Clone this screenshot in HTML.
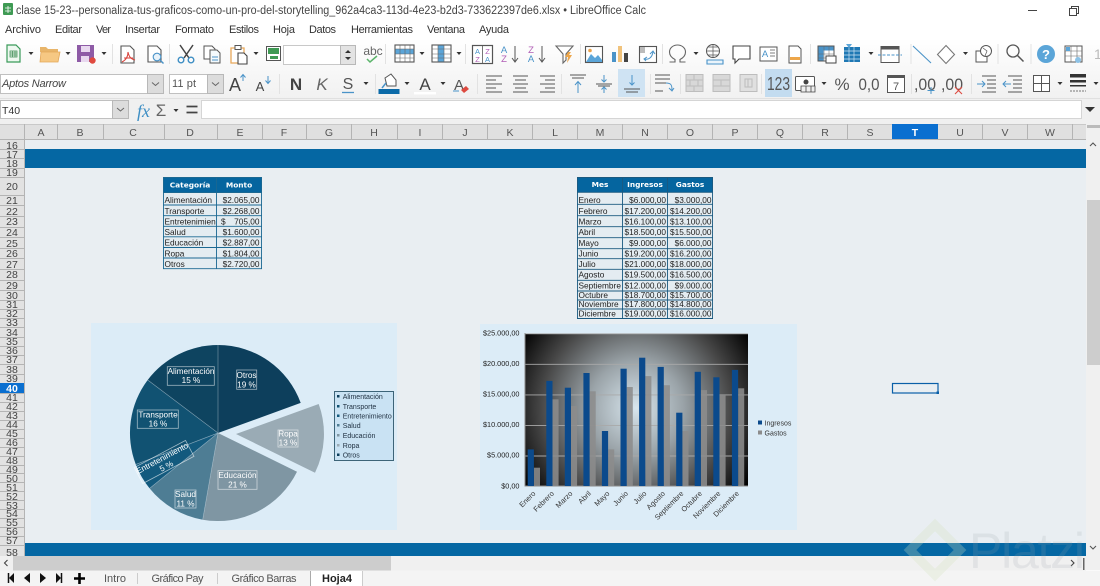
<!DOCTYPE html>
<html lang="es"><head><meta charset="utf-8"><title>LibreOffice Calc</title>
<style>
html,body{margin:0;padding:0;width:1100px;height:586px;overflow:hidden;background:#fff}
svg{display:block;font-family:"Liberation Sans",sans-serif;filter:blur(.35px)}
.m{font-size:11px;fill:#333}
.c{font-size:10.5px;fill:#555;text-anchor:middle}
.r{font-size:10.5px;fill:#444;text-anchor:middle}
.t{font-size:8.3px;fill:#222}
.n{font-size:8.3px;fill:#222;text-anchor:end}
.h{font-family:"DejaVu Sans",sans-serif;font-weight:bold;font-size:7.4px;fill:#fff;text-anchor:middle}
.p{font-size:8.2px;fill:#fff;text-anchor:middle}
.l{font-size:7px;fill:#234}
.y{font-size:7.3px;fill:#222;text-anchor:end}
.x{font-size:7.3px;fill:#333;text-anchor:end}
.b{fill:none;stroke:#fff;stroke-opacity:.6;stroke-width:.8}
.k{fill:none;stroke:#555;stroke-width:1.1}
.tab{font-size:11px;fill:#555;text-anchor:middle}
</style></head><body>
<svg width="1100" height="586" viewBox="0 0 1100 586" xmlns="http://www.w3.org/2000/svg">
<defs>
<linearGradient id="tb" x1="0" y1="0" x2="0" y2="1"><stop offset="0" stop-color="#fff"/><stop offset="1" stop-color="#f1f1f1"/></linearGradient>
<radialGradient id="rg" gradientUnits="userSpaceOnUse" cx="636" cy="408" r="135"><stop offset="0" stop-color="#d8e6ee"/><stop offset=".35" stop-color="#9aa3a8"/><stop offset=".7" stop-color="#484848"/><stop offset="1" stop-color="#000"/></radialGradient>
</defs>
<rect width="1100" height="586" fill="#fff"/>
<!-- title -->
<rect x="3" y="3" width="10" height="12" rx="1" fill="#3f9a54"/><path d="M5 8h6M5 11h6M8 6v7" stroke="#fff" stroke-width=".8"/>
<text x="16" y="14" font-size="11.5" fill="#444" textLength="630" lengthAdjust="spacingAndGlyphs">clase 15-23--personaliza-tus-graficos-como-un-pro-del-storytelling_962a4ca3-113d-4e23-b2d3-733622397de6.xlsx • LibreOffice Calc</text>
<path d="M1028 10.500h9" stroke="#444"/><path d="M1069.500 8.500h7v7h-7zM1071.500 8.500v-2h7v7h-2" fill="none" stroke="#444"/>
<!-- menu -->
<text class="m" x="5" y="33" textLength="36">Archivo</text><text class="m" x="55" y="33" textLength="27">Editar</text><text class="m" x="96" y="33" textLength="15">Ver</text><text class="m" x="125" y="33" textLength="35">Insertar</text><text class="m" x="175" y="33" textLength="39">Formato</text><text class="m" x="229" y="33" textLength="30">Estilos</text><text class="m" x="273" y="33" textLength="22">Hoja</text><text class="m" x="309" y="33" textLength="27">Datos</text><text class="m" x="351" y="33" textLength="62">Herramientas</text><text class="m" x="427" y="33" textLength="38">Ventana</text><text class="m" x="479" y="33" textLength="30">Ayuda</text>
<!-- toolbar bg -->
<rect y="38" width="1100" height="60" fill="url(#tb)"/>
<rect y="98" width="1100" height="26" fill="#f0f0f0"/>
<path d="M0 98.500h1100" stroke="#dedede"/>
<!-- ROW 1 ICONS -->
<path d="M7 45h9l4 4v13H7z" fill="#eef8f0" stroke="#3a9a5a" stroke-width="1.2"/><path d="M10 51h7v6h-7zM10 53h7M10 55h7M12.500 51v6M15 51v6" fill="none" stroke="#3a8a50" stroke-width=".7"/>
<path d="M28.500 52h5l-2.500 3z" fill="#333"/>
<path d="M40 47h6l2 2h10v3h-18z" fill="#e8b56a"/><path d="M40 62l1-10h19l-2 10z" fill="#f6c883" stroke="#e3a85a" stroke-width=".8"/>
<path d="M65.500 52h5l-2.500 3z" fill="#333"/>
<path d="M77 45h17v17H77z" fill="#8e5ba6"/><rect x="81" y="46" width="9" height="6" fill="#e8d8ef"/><rect x="81" y="56" width="8" height="6" fill="#e8d8ef"/><circle cx="92.500" cy="60.500" r="3.200" fill="#e04a3f"/>
<path d="M101.500 52h5l-2.500 3z" fill="#333"/>
<path d="M112.500 44v20" stroke="#e2e2e2"/>
<path d="M121 46h9l4 4v13h-13z" fill="#fff" stroke="#555" stroke-width="1.100"/><path d="M128 52c0 5-2 8-6 10M128 52c1 5 3 7 7 8M124 58h9" fill="none" stroke="#d8413a" stroke-width="1"/>
<path d="M148 46h9l4 4v12h-13z" fill="#fff" stroke="#555" stroke-width="1.100"/><circle cx="157" cy="57" r="3.800" fill="#e9f3fa" stroke="#4a93c8" stroke-width="1.100"/><path d="M160 60l3.500 3.500" stroke="#4a93c8" stroke-width="1.400"/>
<path d="M169.500 44v20" stroke="#e2e2e2"/>
<path d="M180 45l9 13M193 45l-9 13" stroke="#444" stroke-width="1.500"/><circle cx="181" cy="60" r="2.800" fill="none" stroke="#3f8fc4" stroke-width="1.400"/><circle cx="191" cy="60" r="2.800" fill="none" stroke="#3f8fc4" stroke-width="1.400"/>
<path d="M204 46h8l3 3v10h-11z" fill="#fff" stroke="#555"/><path d="M210 50h7l3 3v10h-10z" fill="#f4fafd" stroke="#555"/><path d="M212 57h6M212 60h6" stroke="#4a93c8"/>
<path d="M231 48h13v15h-13z" fill="#fff" stroke="#e8a85a" stroke-width="1.300"/><rect x="235" y="45.500" width="6" height="4" fill="#fff" stroke="#555"/><path d="M238 53h6l3 3v8h-9z" fill="#fff" stroke="#444" stroke-width="1.100"/>
<path d="M253.500 52h5l-2.500 3z" fill="#333"/>
<rect x="266.500" y="46.500" width="14" height="14" fill="#fff" stroke="#555"/><rect x="268" y="48" width="11" height="6" fill="#3f9a54"/><rect x="270" y="56" width="8" height="3" fill="#3f9a54"/>
<rect x="283.500" y="45.500" width="57" height="19" fill="#fff" stroke="#c8c8c8"/><rect x="340.500" y="45.500" width="15" height="19" fill="#e3e3e3" stroke="#b8b8b8"/><path d="M345 53l3-3 3 3zM345 57l3 3 3-3z" fill="#333"/>
<text x="373" y="55" font-size="12" fill="#666" text-anchor="middle">abc</text><path d="M367 59l3 3 7-6" fill="none" stroke="#5cb56b" stroke-width="1.500"/>
<path d="M385.500 44v20" stroke="#e2e2e2"/>
<rect x="395" y="45" width="19" height="17" fill="#fff" stroke="#555" stroke-width="1.100"/><rect x="395.500" y="49" width="18" height="5" fill="#5ba5d8"/><path d="M395 49h19M395 54h19M395 58h19M400 45v17M405 45v17M410 45v17" stroke="#666" stroke-width=".6"/>
<path d="M419.500 52h5l-2.500 3z" fill="#333"/>
<rect x="432" y="45" width="19" height="17" fill="#fff" stroke="#555" stroke-width="1.100"/><rect x="438" y="45.500" width="6" height="16" fill="#5ba5d8"/><path d="M432 49h19M432 54h19M432 58h19M438 45v17M444 45v17" stroke="#666" stroke-width=".6"/>
<path d="M456.500 52h5l-2.500 3z" fill="#333"/>
<path d="M465.500 44v20" stroke="#e2e2e2"/>
<rect x="472.500" y="45.500" width="20" height="18" fill="#fff" stroke="#555" stroke-width="1.200"/><path d="M482.500 45v18" stroke="#555" stroke-width=".8"/>
<text x="477.500" y="54" font-size="7.500" fill="#4a93c8" text-anchor="middle">A</text><text x="477.500" y="62" font-size="7.500" fill="#b05cb5" text-anchor="middle">Z</text><text x="487.500" y="54" font-size="7.500" fill="#b05cb5" text-anchor="middle">Z</text><text x="487.500" y="62" font-size="7.500" fill="#4a93c8" text-anchor="middle">A</text>
<text x="504" y="53" font-size="9.500" fill="#4a93c8" text-anchor="middle">A</text><text x="504" y="62" font-size="9.500" fill="#b05cb5" text-anchor="middle">Z</text><path d="M515 46v16M512 58l3 4 3-4" fill="none" stroke="#555" stroke-width="1"/>
<text x="531" y="53" font-size="9.500" fill="#b05cb5" text-anchor="middle">Z</text><text x="531" y="62" font-size="9.500" fill="#4a93c8" text-anchor="middle">A</text><path d="M542 46v16M539 58l3 4 3-4" fill="none" stroke="#555" stroke-width="1"/>
<path d="M556 46h17l-7 8v6l-3 3v-9z" fill="#fff" stroke="#666" stroke-width="1.100"/><path d="M568 52l-3 5h3l-1 6 5-8h-3l2-3z" fill="#eda64a"/>
<path d="M580.500 44v20" stroke="#e2e2e2"/>
<rect x="585.500" y="46.500" width="17" height="16" fill="#fff" stroke="#555" stroke-width="1.100"/><path d="M586 62l5-8 4 4 3-3 4 5v2z" fill="#5ba5d8"/><circle cx="590" cy="50.500" r="1.800" fill="#eba24b"/>
<rect x="612" y="52" width="4" height="10" fill="#4a93c8"/><rect x="618" y="46" width="4" height="16" fill="#f0c27b"/><rect x="624" y="53" width="4" height="9" fill="#444"/>
<rect x="639.500" y="46.500" width="17" height="16" fill="#fff" stroke="#555" stroke-width="1.100"/><path d="M640 47h5v3h-5zM640 50h5v3h-5z" fill="#bbb"/><path d="M645 59c3 1 7-1 8-7M650 54l3-3 2 3M647 57l-3 2 2 2" fill="none" stroke="#4a93c8" stroke-width="1"/>
<path d="M662.500 44v20" stroke="#e2e2e2"/>
<path d="M669.500 62h5.500v-2.500c-3.500-1.800-5.500-4.500-5.500-7.500 0-4 3.600-7 8-7s8 3 8 7c0 3-2 5.700-5.500 7.500V62h5.500" fill="none" stroke="#666" stroke-width="1.100"/>
<path d="M693.500 52h5l-2.500 3z" fill="#333"/>
<circle cx="713" cy="51" r="6.500" fill="none" stroke="#555"/><path d="M706.500 51h13M713 44.500v13M708 47h10M708 55h10" stroke="#555" stroke-width=".7"/><path d="M707 60h16v4h-16z" fill="#eaf4fb" stroke="#4a93c8" stroke-width="1.100"/>
<path d="M733 46h17v13h-11l-4 4v-4h-2z" fill="#fff" stroke="#444" stroke-width="1.100"/>
<rect x="760" y="47" width="17" height="14" fill="#fff" stroke="#555"/><text x="765" y="57" font-size="9.500" fill="#4a93c8" text-anchor="middle">A</text><path d="M770 50h5M770 53h5M770 56h5" stroke="#555" stroke-width=".8"/>
<path d="M789 46h9l3 3v14h-12z" fill="#fff" stroke="#555"/><rect x="790" y="57" width="10" height="3" fill="#eda64a"/>
<path d="M810.500 44v20" stroke="#e2e2e2"/>
<rect x="818" y="46" width="16" height="15" fill="#fff" stroke="#555"/><rect x="818.500" y="46.500" width="15" height="4" fill="#4a93c8"/><rect x="818.500" y="46.500" width="5" height="14" fill="#4a93c8"/><path d="M818 54h16M818 58h16M824 46v15M829 46v15" stroke="#666" stroke-width=".5"/><rect x="826" y="56" width="10" height="7" fill="#fff" stroke="#444"/>
<rect x="844" y="47" width="16" height="15" fill="#1f78b4"/><path d="M844 51h16M844 55h16M844 59h16M849 47v15M854 47v15" stroke="#cfe5f3" stroke-width=".7"/><path d="M846 44l3 4 3-4" fill="#5ba5d8"/>
<path d="M868.500 52h5l-2.500 3z" fill="#333"/>
<rect x="881" y="46.500" width="18" height="16" fill="#fff" stroke="#555"/><rect x="881" y="46.500" width="18" height="3" fill="#555"/><path d="M878 55h24" stroke="#4a93c8" stroke-dasharray="3 1.500"/>
<path d="M911 44v20" stroke="#e2e2e2"/>
<path d="M913 46l18 17" stroke="#4a93c8" stroke-width="1.100"/>
<path d="M946 45.500l8.500 9-8.500 9-8.500-9z" fill="#fff" stroke="#777" stroke-width="1.100"/>
<path d="M963 52h5l-2.500 3z" fill="#333"/>
<rect x="976" y="51" width="11" height="11" fill="#fff" stroke="#555"/><circle cx="986" cy="51" r="5.500" fill="#fff" stroke="#555"/><path d="M983 48l4 3-2 5" fill="none" stroke="#555" stroke-width=".7"/>
<path d="M998 44v20" stroke="#e2e2e2"/>
<circle cx="1013" cy="51" r="6" fill="none" stroke="#555" stroke-width="1.300"/><path d="M1017.500 55.500l6 6" stroke="#555" stroke-width="1.500"/>
<path d="M1031 44v20" stroke="#e2e2e2"/>
<circle cx="1046" cy="54" r="9" fill="#5ba5d8"/><text x="1046" y="59" font-size="13" font-weight="bold" fill="#fff" text-anchor="middle">?</text>
<rect x="1065" y="46" width="17" height="16" fill="#fff" stroke="#555"/><path d="M1065 51h17M1065 56h17M1071 46v16M1077 46v16" stroke="#666" stroke-width=".6"/><rect x="1066" y="47" width="4" height="4" fill="#5ba5d8"/><circle cx="1078" cy="60" r="3" fill="#8dc2e6"/>
<text x="1094" y="59" font-size="14" fill="#bbb">12</text>
<!-- ROW 2 -->
<rect x=".5" y="74.500" width="147" height="19" fill="#fff" stroke="#c0c0c0"/><text x="2" y="87" font-size="11" font-style="italic" fill="#444" textLength="64">Aptos Narrow</text>
<rect x="147.500" y="74.500" width="16" height="19" fill="#dcdcdc" stroke="#b8b8b8"/><path d="M152 82.500l3.500 3 3.500-3" fill="none" stroke="#666"/>
<rect x="169.500" y="74.500" width="38" height="19" fill="#fff" stroke="#c0c0c0"/><text x="172" y="87" font-size="11" fill="#555" textLength="24">11 pt</text>
<rect x="207.500" y="74.500" width="16" height="19" fill="#dcdcdc" stroke="#b8b8b8"/><path d="M212 82.500l3.500 3 3.500-3" fill="none" stroke="#666"/>
<text x="235" y="91" font-size="18" fill="#444" text-anchor="middle">A</text><path d="M243 81v-6M240.500 77.500l2.500-3 2.500 3" fill="none" stroke="#4a93c8"/>
<text x="260" y="91" font-size="13" fill="#444" text-anchor="middle">A</text><path d="M268 76v7M265.500 80.500l2.500 3 2.500-3" fill="none" stroke="#4a93c8"/>
<path d="M279.500 74v20" stroke="#e2e2e2"/>
<text x="296" y="90" font-size="17" font-weight="bold" fill="#444" text-anchor="middle">N</text>
<text x="322" y="90" font-size="17" font-style="italic" fill="#666" text-anchor="middle">K</text>
<text x="348" y="89" font-size="16" fill="#555" text-anchor="middle">S</text><path d="M342 92.500h12" stroke="#4a93c8" stroke-width="1.300"/>
<path d="M363.500 82h5l-2.500 3z" fill="#333"/>
<path d="M375.500 74v20" stroke="#e2e2e2"/>
<rect x="378.500" y="89" width="21" height="5" fill="#0b6aa8"/><path d="M385 78l6-4 5 6v6h-9z" fill="#fff" stroke="#555"/><path d="M382 88l4-5" stroke="#4a93c8" stroke-width="1.500"/>
<path d="M404.500 82h5l-2.500 3z" fill="#333"/>
<text x="425" y="90" font-size="17" fill="#444" text-anchor="middle">A</text><rect x="414" y="92" width="22" height="2.500" fill="#fff"/>
<path d="M440.500 82h5l-2.500 3z" fill="#333"/>
<text x="459" y="90" font-size="15" fill="#555" text-anchor="middle">A</text><path d="M453 91h6" stroke="#4a93c8"/><path d="M461 90l5-4 3 3-5 4z" fill="#dd4a40"/>
<path d="M477.500 74v20" stroke="#e2e2e2"/>
<path d="M486 76h16M486 80h10M486 84h16M486 88h10M486 92h16" stroke="#555" stroke-width="1.100"/>
<path d="M513 76h15M515 80h11M513 84h15M515 88h11M513 92h15" stroke="#555" stroke-width="1.100"/>
<path d="M540 76h15M545 80h10M540 84h15M545 88h10M540 92h15" stroke="#555" stroke-width="1.100"/>
<path d="M561.500 74v20" stroke="#e2e2e2"/>
<path d="M570 75h16M572 78h12" stroke="#555" stroke-width="1.100"/><path d="M578 93v-11M575 85l3-3.500 3 3.500" fill="none" stroke="#4a93c8"/>
<path d="M596 84h16M598 86h12" stroke="#555" stroke-width="1.100"/><path d="M604 75v7M601.500 79.500l2.500 2.500 2.500-2.500M604 93v-6M601.500 89.500l2.500-2.500 2.500 2.500" fill="none" stroke="#4a93c8"/>
<rect x="618" y="69" width="27" height="28" fill="#cfe3f3"/>
<path d="M624 89h16M626 92h12" stroke="#555" stroke-width="1.100"/><path d="M632 75v10M629.500 82.500l2.500 2.500 2.500-2.500" fill="none" stroke="#4a93c8"/>
<path d="M650.500 74v20" stroke="#e2e2e2"/>
<path d="M655 75h15M655 79h15M655 83h11M655 91h8" stroke="#555" stroke-width="1.100"/><path d="M666 83c5 0 6 2 6 7M669 88l3 3 2-3" fill="none" stroke="#4a93c8"/>
<path d="M680.500 74v20" stroke="#e2e2e2"/>
<rect x="686" y="74.500" width="17" height="17" fill="#d8d8d8" stroke="#bdbdbd"/><path d="M686 80h17M686 86h17M694 74v6M690 80v6M698 80v6M694 86v6" stroke="#bdbdbd"/>
<rect x="713" y="74.500" width="17" height="17" fill="#d8d8d8" stroke="#bdbdbd"/><path d="M713 80h17M713 86h17M721 80v6" stroke="#bdbdbd"/>
<rect x="740" y="74.500" width="17" height="17" fill="#e0e0e0" stroke="#bdbdbd"/><path d="M745 79h7v8h-7zM748 79v8" fill="none" stroke="#bdbdbd"/>
<path d="M761.500 74v20" stroke="#e2e2e2"/>
<rect x="765" y="69" width="27" height="28" fill="#c3dcf0"/>
<text x="778.500" y="90" font-size="18" fill="#555" text-anchor="middle" textLength="23" lengthAdjust="spacingAndGlyphs">123</text>
<rect x="795.500" y="76.500" width="19" height="14" rx="1" fill="#fff" stroke="#555"/><circle cx="806" cy="82" r="2.500" fill="#444"/><path d="M801 86h14v6h-14zM806 86v6M811 86v6" fill="#eee" stroke="#444" stroke-width=".8"/>
<path d="M821.500 82h5l-2.500 3z" fill="#333"/>
<text x="842" y="90" font-size="17" fill="#555" text-anchor="middle">%</text>
<text x="869" y="90" font-size="17" fill="#555" text-anchor="middle" textLength="21" lengthAdjust="spacingAndGlyphs">0,0</text>
<rect x="887.500" y="76.500" width="17" height="16" fill="#fff" stroke="#555"/><rect x="887" y="75" width="18" height="3" fill="#555"/><text x="896" y="90" font-size="11" fill="#555" text-anchor="middle">7</text>
<path d="M911.500 74v20" stroke="#e2e2e2"/>
<text x="925" y="90" font-size="17" fill="#555" text-anchor="middle" textLength="22" lengthAdjust="spacingAndGlyphs">,00</text><path d="M931 87v7M927.500 90.500h7" stroke="#4a93c8"/>
<text x="952" y="90" font-size="17" fill="#555" text-anchor="middle" textLength="22" lengthAdjust="spacingAndGlyphs">,00</text><path d="M955 87l7 7M962 87l-7 7" stroke="#dd4a40" stroke-width="1.100"/>
<path d="M971.500 74v20" stroke="#e2e2e2"/>
<path d="M982 76h14M987 80h9M987 84h9M987 88h9M982 92h14" stroke="#555"/><path d="M977 84h8M982 81l3 3-3 3" fill="none" stroke="#4a93c8"/>
<path d="M1008 76h14M1013 80h9M1013 84h9M1013 88h9M1008 92h14" stroke="#555"/><path d="M1003 84h8M1006 81l-3 3 3 3" fill="none" stroke="#4a93c8"/>
<rect x="1033.500" y="75.500" width="16" height="16" fill="#fff" stroke="#555"/><path d="M1041.500 75v17M1033 83.500h17" stroke="#555"/>
<path d="M1057.500 82h5l-2.500 3z" fill="#333"/>
<rect x="1070" y="74" width="16" height="3.500" fill="#333"/><rect x="1070" y="80" width="16" height="2.500" fill="#333"/><rect x="1070" y="85" width="16" height="1.500" fill="#333"/><path d="M1070 91h16" stroke="#777" stroke-dasharray="2 1"/>
<path d="M1093.500 82h5l-2.500 3z" fill="#333"/>
<path d="M0 98.500h1100" stroke="#e0e0e0"/>
<!-- ROW 3 -->
<rect x=".5" y="100.500" width="112" height="18" fill="#fff" stroke="#c0c0c0"/><text x="2" y="114" font-size="10.500" fill="#333">T40</text>
<rect x="112.500" y="100.500" width="16" height="18" fill="#dcdcdc" stroke="#b8b8b8"/><path d="M117 108l3.500 3 3.500-3" fill="none" stroke="#666"/>
<text x="137" y="117" font-family="Liberation Serif" font-style="italic" font-size="18" fill="#3f8fc4">fx</text>
<text x="161" y="116" font-size="17" fill="#666" text-anchor="middle">Σ</text>
<path d="M173.500 109h5l-2.500 3z" fill="#333"/>
<path d="M186.500 106.500h11M186.500 112.500h11" stroke="#444" stroke-width="1.800"/>
<rect x="201.500" y="100.500" width="880" height="18" fill="#fff" stroke="#d5d5d5"/>
<path d="M1085 107h10l-5 5z" fill="#333"/>
<!-- sheet -->
<rect x="24" y="139" width="1062" height="417" fill="#e9eef2"/>
<rect y="124" width="1100" height="15" fill="#e0e0e0"/>
<rect y="139" width="24" height="417" fill="#e2e2e2"/>
<path d="M0 124.500h1086" stroke="#c9c9c9"/><path d="M0 139.500h1086" stroke="#b4b4b4"/>
<path d="M24.500 124v15M57.500 124v15M103.500 124v15M164.500 124v15M217.500 124v15M262.500 124v15M306.500 124v15M351.500 124v15M397.500 124v15M442.500 124v15M487.500 124v15M532.500 124v15M577.500 124v15M622.500 124v15M667.500 124v15M712.500 124v15M757.500 124v15M802.500 124v15M847.500 124v15M892.500 124v15M937.500 124v15M982.500 124v15M1027.500 124v15M1072.500 124v15" stroke="#b4b4b4"/>
<rect x="892" y="124" width="46" height="15" fill="#0a6fd0"/>
<text class="c" x="41" y="136">A</text><text class="c" x="80" y="136">B</text><text class="c" x="133" y="136">C</text><text class="c" x="190" y="136">D</text><text class="c" x="240" y="136">E</text><text class="c" x="284" y="136">F</text><text class="c" x="329" y="136">G</text><text class="c" x="374" y="136">H</text><text class="c" x="420" y="136">I</text><text class="c" x="465" y="136">J</text><text class="c" x="510" y="136">K</text><text class="c" x="555" y="136">L</text><text class="c" x="600" y="136">M</text><text class="c" x="645" y="136">N</text><text class="c" x="690" y="136">O</text><text class="c" x="735" y="136">P</text><text class="c" x="780" y="136">Q</text><text class="c" x="825" y="136">R</text><text class="c" x="870" y="136">S</text><text class="c" x="915" y="136" style="fill:#fff;font-weight:bold">T</text><text class="c" x="960" y="136">U</text><text class="c" x="1005" y="136">V</text><text class="c" x="1050" y="136">W</text>
<!-- row separators -->
<path d="M0 149.500h24M0 158.500h24M0 168.500h24M0 177.500h24M0 195.500h24M0 205.500h24M0 216.500h24M0 227.500h24M0 237.500h24M0 248.500h24M0 258.500h24M0 269.500h24M0 280.500h24M0 290.500h24M0 300.500h24M0 309.500h24M0 318.500h24M0 327.500h24M0 337.500h24M0 346.500h24M0 355.500h24M0 364.500h24M0 374.500h24M0 383.500h24M0 393.500h24M0 402.500h24M0 411.500h24M0 420.500h24M0 429.500h24M0 438.500h24M0 447.500h24M0 456.500h24M0 465.500h24M0 473.500h24M0 482.500h24M0 491.500h24M0 500.500h24M0 509.500h24M0 518.500h24M0 527.500h24M0 536.500h24M0 545.500h24" stroke="#b4b4b4"/>
<path d="M24.500 139v417" stroke="#b4b4b4"/>
<rect y="383" width="24" height="10" fill="#0a6fd0"/>
<text class="r" x="12" y="149">16</text><text class="r" x="12" y="158">17</text><text class="r" x="12" y="167">18</text><text class="r" x="12" y="176">19</text><text class="r" x="12" y="190">20</text><text class="r" x="12" y="204">21</text><text class="r" x="12" y="215">22</text><text class="r" x="12" y="225">23</text><text class="r" x="12" y="236">24</text><text class="r" x="12" y="247">25</text><text class="r" x="12" y="257">26</text><text class="r" x="12" y="268">27</text><text class="r" x="12" y="278">28</text><text class="r" x="12" y="289">29</text><text class="r" x="12" y="299">30</text><text class="r" x="12" y="308">31</text><text class="r" x="12" y="317">32</text><text class="r" x="12" y="326">33</text><text class="r" x="12" y="336">34</text><text class="r" x="12" y="345">35</text><text class="r" x="12" y="354">36</text><text class="r" x="12" y="363">37</text><text class="r" x="12" y="373">38</text><text class="r" x="12" y="382">39</text><text class="r" x="12" y="392" style="fill:#fff;font-weight:bold">40</text><text class="r" x="12" y="401">41</text><text class="r" x="12" y="410">42</text><text class="r" x="12" y="419">43</text><text class="r" x="12" y="428">44</text><text class="r" x="12" y="437">45</text><text class="r" x="12" y="446">46</text><text class="r" x="12" y="455">47</text><text class="r" x="12" y="464">48</text><text class="r" x="12" y="473">49</text><text class="r" x="12" y="482">50</text><text class="r" x="12" y="491">51</text><text class="r" x="12" y="500">52</text><text class="r" x="12" y="509">53</text><text class="r" x="12" y="517">54</text><text class="r" x="12" y="526">55</text><text class="r" x="12" y="535">56</text><text class="r" x="12" y="544">57</text><text class="r" x="12" y="556">58</text>
<!-- bands -->
<rect x="25" y="149" width="1061" height="19" fill="#0567a3"/>
<rect x="25" y="543" width="1061" height="13" fill="#0567a3"/>
<!-- table 1 -->
<rect x="163" y="177" width="99" height="92" fill="#e4ecf1"/>
<rect x="163" y="177" width="99" height="16" fill="#05659f"/>
<path d="M163.500 177v92M216.500 177v92M261.500 177v92M163 177.500h99M163 192.500h99M163 205h99M163 215.700h99M163 226.300h99M163 236.800h99M163 247.500h99M163 258h99M163 268.700h99" stroke="#1b6892" stroke-width=".9" fill="none"/>
<text class="h" x="190" y="187.500">Categoría</text><text class="h" x="239" y="187.500">Monto</text>
<text class="t" x="164.500" y="203">Alimentación</text><text class="n" x="259.500" y="203">$2.065,00</text>
<text class="t" x="164.500" y="214">Transporte</text><text class="n" x="259.500" y="214">$2.268,00</text>
<text class="t" x="164.500" y="224.500">Entretenimien</text><text class="t" x="221" y="224.500">$</text><text class="n" x="259.500" y="224.500">705,00</text>
<text class="t" x="164.500" y="235">Salud</text><text class="n" x="259.500" y="235">$1.600,00</text>
<text class="t" x="164.500" y="245.500">Educación</text><text class="n" x="259.500" y="245.500">$2.887,00</text>
<text class="t" x="164.500" y="256.500">Ropa</text><text class="n" x="259.500" y="256.500">$1.804,00</text>
<text class="t" x="164.500" y="267">Otros</text><text class="n" x="259.500" y="267">$2.720,00</text>
<!-- table 2 -->
<rect x="577" y="177" width="136" height="142" fill="#e4ecf1"/>
<rect x="577" y="177" width="136" height="15.500" fill="#05659f"/>
<path d="M577.500 177v142M622.500 177v142M667.500 177v142M712.500 177v142M577 177.500h136M577 192.300h136M577 204.300h136M577 215.700h136M577 226.700h136M577 237.700h136M577 248.700h136M577 258.700h136M577 269.300h136M577 280.300h136M577 291h136M577 300h136M577 309h136M577 318.500h136" stroke="#1b5a80" stroke-width=".9" fill="none"/>
<text class="h" x="600" y="187">Mes</text><text class="h" x="645" y="187">Ingresos</text><text class="h" x="690" y="187">Gastos</text>
<text class="t" x="578.500" y="203">Enero</text><text class="n" x="666" y="203">$6.000,00</text><text class="n" x="711.500" y="203">$3.000,00</text>
<text class="t" x="578.500" y="214">Febrero</text><text class="n" x="666" y="214">$17.200,00</text><text class="n" x="711.500" y="214">$14.200,00</text>
<text class="t" x="578.500" y="224.500">Marzo</text><text class="n" x="666" y="224.500">$16.100,00</text><text class="n" x="711.500" y="224.500">$13.100,00</text>
<text class="t" x="578.500" y="235">Abril</text><text class="n" x="666" y="235">$18.500,00</text><text class="n" x="711.500" y="235">$15.500,00</text>
<text class="t" x="578.500" y="246">Mayo</text><text class="n" x="666" y="246">$9.000,00</text><text class="n" x="711.500" y="246">$6.000,00</text>
<text class="t" x="578.500" y="256.500">Junio</text><text class="n" x="666" y="256.500">$19.200,00</text><text class="n" x="711.500" y="256.500">$16.200,00</text>
<text class="t" x="578.500" y="267">Julio</text><text class="n" x="666" y="267">$21.000,00</text><text class="n" x="711.500" y="267">$18.000,00</text>
<text class="t" x="578.500" y="277.500">Agosto</text><text class="n" x="666" y="277.500">$19.500,00</text><text class="n" x="711.500" y="277.500">$16.500,00</text>
<text class="t" x="578.500" y="288.500">Septiembre</text><text class="n" x="666" y="288.500">$12.000,00</text><text class="n" x="711.500" y="288.500">$9.000,00</text>
<text class="t" x="578.500" y="298">Octubre</text><text class="n" x="666" y="298">$18.700,00</text><text class="n" x="711.500" y="298">$15.700,00</text>
<text class="t" x="578.500" y="307">Noviembre</text><text class="n" x="666" y="307">$17.800,00</text><text class="n" x="711.500" y="307">$14.800,00</text>
<text class="t" x="578.500" y="316.500">Diciembre</text><text class="n" x="666" y="316.500">$19.000,00</text><text class="n" x="711.500" y="316.500">$16.000,00</text>
<!-- pie chart -->
<rect x="91" y="323" width="306" height="207" fill="#dcecf7"/>
<path d="M218 433L218 345A88 88 0 0 1 300.700 402.900Z" fill="#0d3f5c"/>
<path d="M236 434L318.700 404A88 88 0 0 1 315 472.700Z" fill="#9aabb5"/>
<path d="M218 433L297 471.700A88 88 0 0 1 202.700 519.700Z" fill="#7f96a3"/>
<path d="M218 433L202.700 519.700A88 88 0 0 1 149.600 488.400Z" fill="#4e7d94"/>
<path d="M218 433L149.600 488.400A88 88 0 0 1 135.800 464.500Z" fill="#135a7e"/>
<path d="M218 433L135.800 464.500A88 88 0 0 1 147.700 380Z" fill="#115272"/>
<path d="M218 433L147.700 380A88 88 0 0 1 218 345Z" fill="#0e4460"/>
<path d="M218 433V345M218 433L147.700 380M218 433L135.800 464.500M218 433L149.600 488.400M218 433L202.700 519.700" stroke="#c7d6df" stroke-opacity=".5" stroke-width=".7"/>
<rect class="b" x="167.300" y="366.700" width="47" height="18.600"/><text class="p" x="191" y="374">Alimentación</text><text class="p" x="191" y="383">15 %</text>
<rect class="b" x="236.700" y="370" width="20" height="19.300"/><text class="p" x="246.500" y="378">Otros</text><text class="p" x="246.500" y="387.500">19 %</text>
<rect class="b" x="278" y="430" width="20" height="17"/><text class="p" x="288" y="436.500">Ropa</text><text class="p" x="288" y="445.500">13 %</text>
<rect class="b" x="218" y="470.700" width="39" height="18.600"/><text class="p" x="237.500" y="478">Educación</text><text class="p" x="237.500" y="487.500">21 %</text>
<rect class="b" x="175" y="490" width="21" height="18"/><text class="p" x="185.500" y="497">Salud</text><text class="p" x="185.500" y="506.500">11 %</text>
<rect class="b" x="137.300" y="410" width="41" height="18.300"/><text class="p" x="158" y="417.500">Transporte</text><text class="p" x="158" y="426.500">16 %</text>
<g transform="rotate(-28 164 461.700)"><rect class="b" x="135" y="453" width="58" height="18"/><text class="p" x="164" y="460.500">Entretenimiento</text><text class="p" x="164" y="469.500">5 %</text></g>
<rect x="334.500" y="391.500" width="59" height="69" fill="#c9e2f3" stroke="#3d6478"/>
<rect x="337" y="395" width="2.500" height="2.500" fill="#0d3f5c"/><text class="l" x="342.700" y="399">Alimentación</text>
<rect x="337" y="405" width="2.500" height="2.500" fill="#115272"/><text class="l" x="342.700" y="409">Transporte</text>
<rect x="337" y="414.500" width="2.500" height="2.500" fill="#135a7e"/><text class="l" x="342.700" y="418.500">Entretenimiento</text>
<rect x="337" y="424" width="2.500" height="2.500" fill="#4e7d94"/><text class="l" x="342.700" y="428">Salud</text>
<rect x="337" y="434" width="2.500" height="2.500" fill="#7f96a3"/><text class="l" x="342.700" y="438">Educación</text>
<rect x="337" y="444" width="2.500" height="2.500" fill="#9aabb5"/><text class="l" x="342.700" y="448">Ropa</text>
<rect x="337" y="453.500" width="2.500" height="2.500" fill="#0d3f5c"/><text class="l" x="342.700" y="457.500">Otros</text>
<!-- bar chart -->
<rect x="480" y="324" width="317" height="206" fill="#dcecf7"/>
<rect x="525" y="333.500" width="223" height="152.500" fill="url(#rg)"/>
<path d="M525 333.800h223M525 364.300h223M525 394.900h223M525 425.400h223M525 456h223" stroke="#a9a9a9" stroke-width=".9"/>
<path d="M525 333v153h223" fill="none" stroke="#8a8a8a"/>
<text class="y" x="519.500" y="335.500">$25.000,00</text><text class="y" x="519.500" y="366">$20.000,00</text><text class="y" x="519.500" y="396.500">$15.000,00</text><text class="y" x="519.500" y="427">$10.000,00</text><text class="y" x="519.500" y="457.500">$5.000,00</text><text class="y" x="519.500" y="488.500">$0,00</text>
<g fill="#8c8c8c" fill-opacity=".88">
<rect x="533.900" y="467.700" width="6.100" height="18.300"/><rect x="552.500" y="399.300" width="6.100" height="86.700"/><rect x="571" y="406" width="6.100" height="80"/><rect x="589.600" y="391.300" width="6.100" height="94.700"/><rect x="608.100" y="449.400" width="6.100" height="36.600"/><rect x="626.700" y="387" width="6.100" height="99"/><rect x="645.300" y="376.100" width="6.100" height="109.900"/><rect x="663.800" y="385.200" width="6.100" height="100.800"/><rect x="682.400" y="431" width="6.100" height="55"/><rect x="700.900" y="390.100" width="6.100" height="95.900"/><rect x="719.500" y="395.600" width="6.100" height="90.400"/><rect x="738.100" y="388.300" width="6.100" height="97.700"/>
</g>
<g fill="#0b4a8c">
<rect x="527.700" y="449.400" width="6.200" height="36.600"/><rect x="546.300" y="380.900" width="6.200" height="105.100"/><rect x="564.800" y="387.700" width="6.200" height="98.300"/><rect x="583.400" y="373" width="6.200" height="113"/><rect x="601.900" y="431" width="6.200" height="55"/><rect x="620.500" y="368.700" width="6.200" height="117.300"/><rect x="639.100" y="357.700" width="6.200" height="128.300"/><rect x="657.600" y="366.900" width="6.200" height="119.100"/><rect x="676.200" y="412.700" width="6.200" height="73.300"/><rect x="694.700" y="371.800" width="6.200" height="114.200"/><rect x="713.300" y="377.300" width="6.200" height="108.700"/><rect x="731.900" y="369.900" width="6.200" height="116.100"/>
</g>
<text class="x" transform="translate(536 494) rotate(-45)">Enero</text><text class="x" transform="translate(554.500 494) rotate(-45)">Febrero</text><text class="x" transform="translate(573 494) rotate(-45)">Marzo</text><text class="x" transform="translate(591.500 494) rotate(-45)">Abril</text><text class="x" transform="translate(610 494) rotate(-45)">Mayo</text><text class="x" transform="translate(628.500 494) rotate(-45)">Junio</text><text class="x" transform="translate(647 494) rotate(-45)">Julio</text><text class="x" transform="translate(665.500 494) rotate(-45)">Agosto</text><text class="x" transform="translate(684 494) rotate(-45)">Septiembre</text><text class="x" transform="translate(702.500 494) rotate(-45)">Octubre</text><text class="x" transform="translate(721 494) rotate(-45)">Noviembre</text><text class="x" transform="translate(739.500 494) rotate(-45)">Diciembre</text>
<rect x="758" y="420.500" width="4" height="4" fill="#0b4a8c"/><text x="764.500" y="425.500" font-size="7" fill="#333">Ingresos</text>
<rect x="758" y="430.500" width="4" height="4" fill="#8c8c8c"/><text x="764.500" y="435.500" font-size="7" fill="#333">Gastos</text>
<!-- selected cell -->
<rect x="892.500" y="383.500" width="45.500" height="9.500" fill="none" stroke="#0a5fa8" stroke-width="1.200"/><rect x="936.500" y="391.500" width="2.500" height="2.500" fill="#0a5fa8"/>
<!-- right scrollbar -->
<rect x="1086" y="124" width="14" height="446" fill="#f0f0f0"/>
<rect x="1087" y="200" width="13" height="165" fill="#cdcdcd"/>
<rect x="1087" y="125" width="13" height="3" fill="#bbb"/>
<path d="M1090 146l3-3 3 3M1090 546l3 3 3-3" fill="none" stroke="#555" stroke-width="1.100"/>
<!-- bottom bars -->
<rect y="556" width="1086" height="14.500" fill="#f0f0f0"/>
<rect x="13" y="556" width="378" height="14.500" fill="#cdcdcd"/>
<path d="M7.500 560l-3 3 3 3M1071 560l3 3-3 3" fill="none" stroke="#444" stroke-width="1.100"/>
<rect x="1083" y="558" width="1.500" height="12" fill="#666"/>
<rect y="570.500" width="1100" height="15.500" fill="#f4f4f4"/>
<path d="M8.500 573v10" stroke="#111" stroke-width="1.500"/><path d="M14 573v10l-5-5z" fill="#111"/>
<path d="M30 573v10l-6-5z" fill="#111"/>
<path d="M40 573v10l6-5z" fill="#111"/>
<path d="M56 573v10l5-5z" fill="#111"/><path d="M61.500 573v10" stroke="#111" stroke-width="1.500"/>
<path d="M74 578.500h11M79.500 573v11" stroke="#000" stroke-width="2.600"/>
<text class="tab" x="115" y="582">Intro</text><path d="M137.500 573v11" stroke="#ccc"/>
<text class="tab" x="177.500" y="582" textLength="52">Gráfico Pay</text><path d="M217.500 573v11" stroke="#ccc"/>
<text class="tab" x="264" y="582" textLength="65">Gráfico Barras</text>
<rect x="310" y="571" width="52" height="15" fill="#fff"/><path d="M310.500 571v15" stroke="#aaa"/><path d="M362.500 571v15" stroke="#ccc"/>
<text class="tab" x="337" y="582" style="font-weight:bold;fill:#222">Hoja4</text>
<!-- watermark -->
<path d="M935 525l25 25-25 25-25-25z" fill="none" stroke="#d3e3bd" stroke-width="9" opacity=".28"/>
<text x="969" y="568" font-size="50" fill="#9aa3ab" opacity=".17" textLength="116">Platzi</text>
</svg>
</body></html>
